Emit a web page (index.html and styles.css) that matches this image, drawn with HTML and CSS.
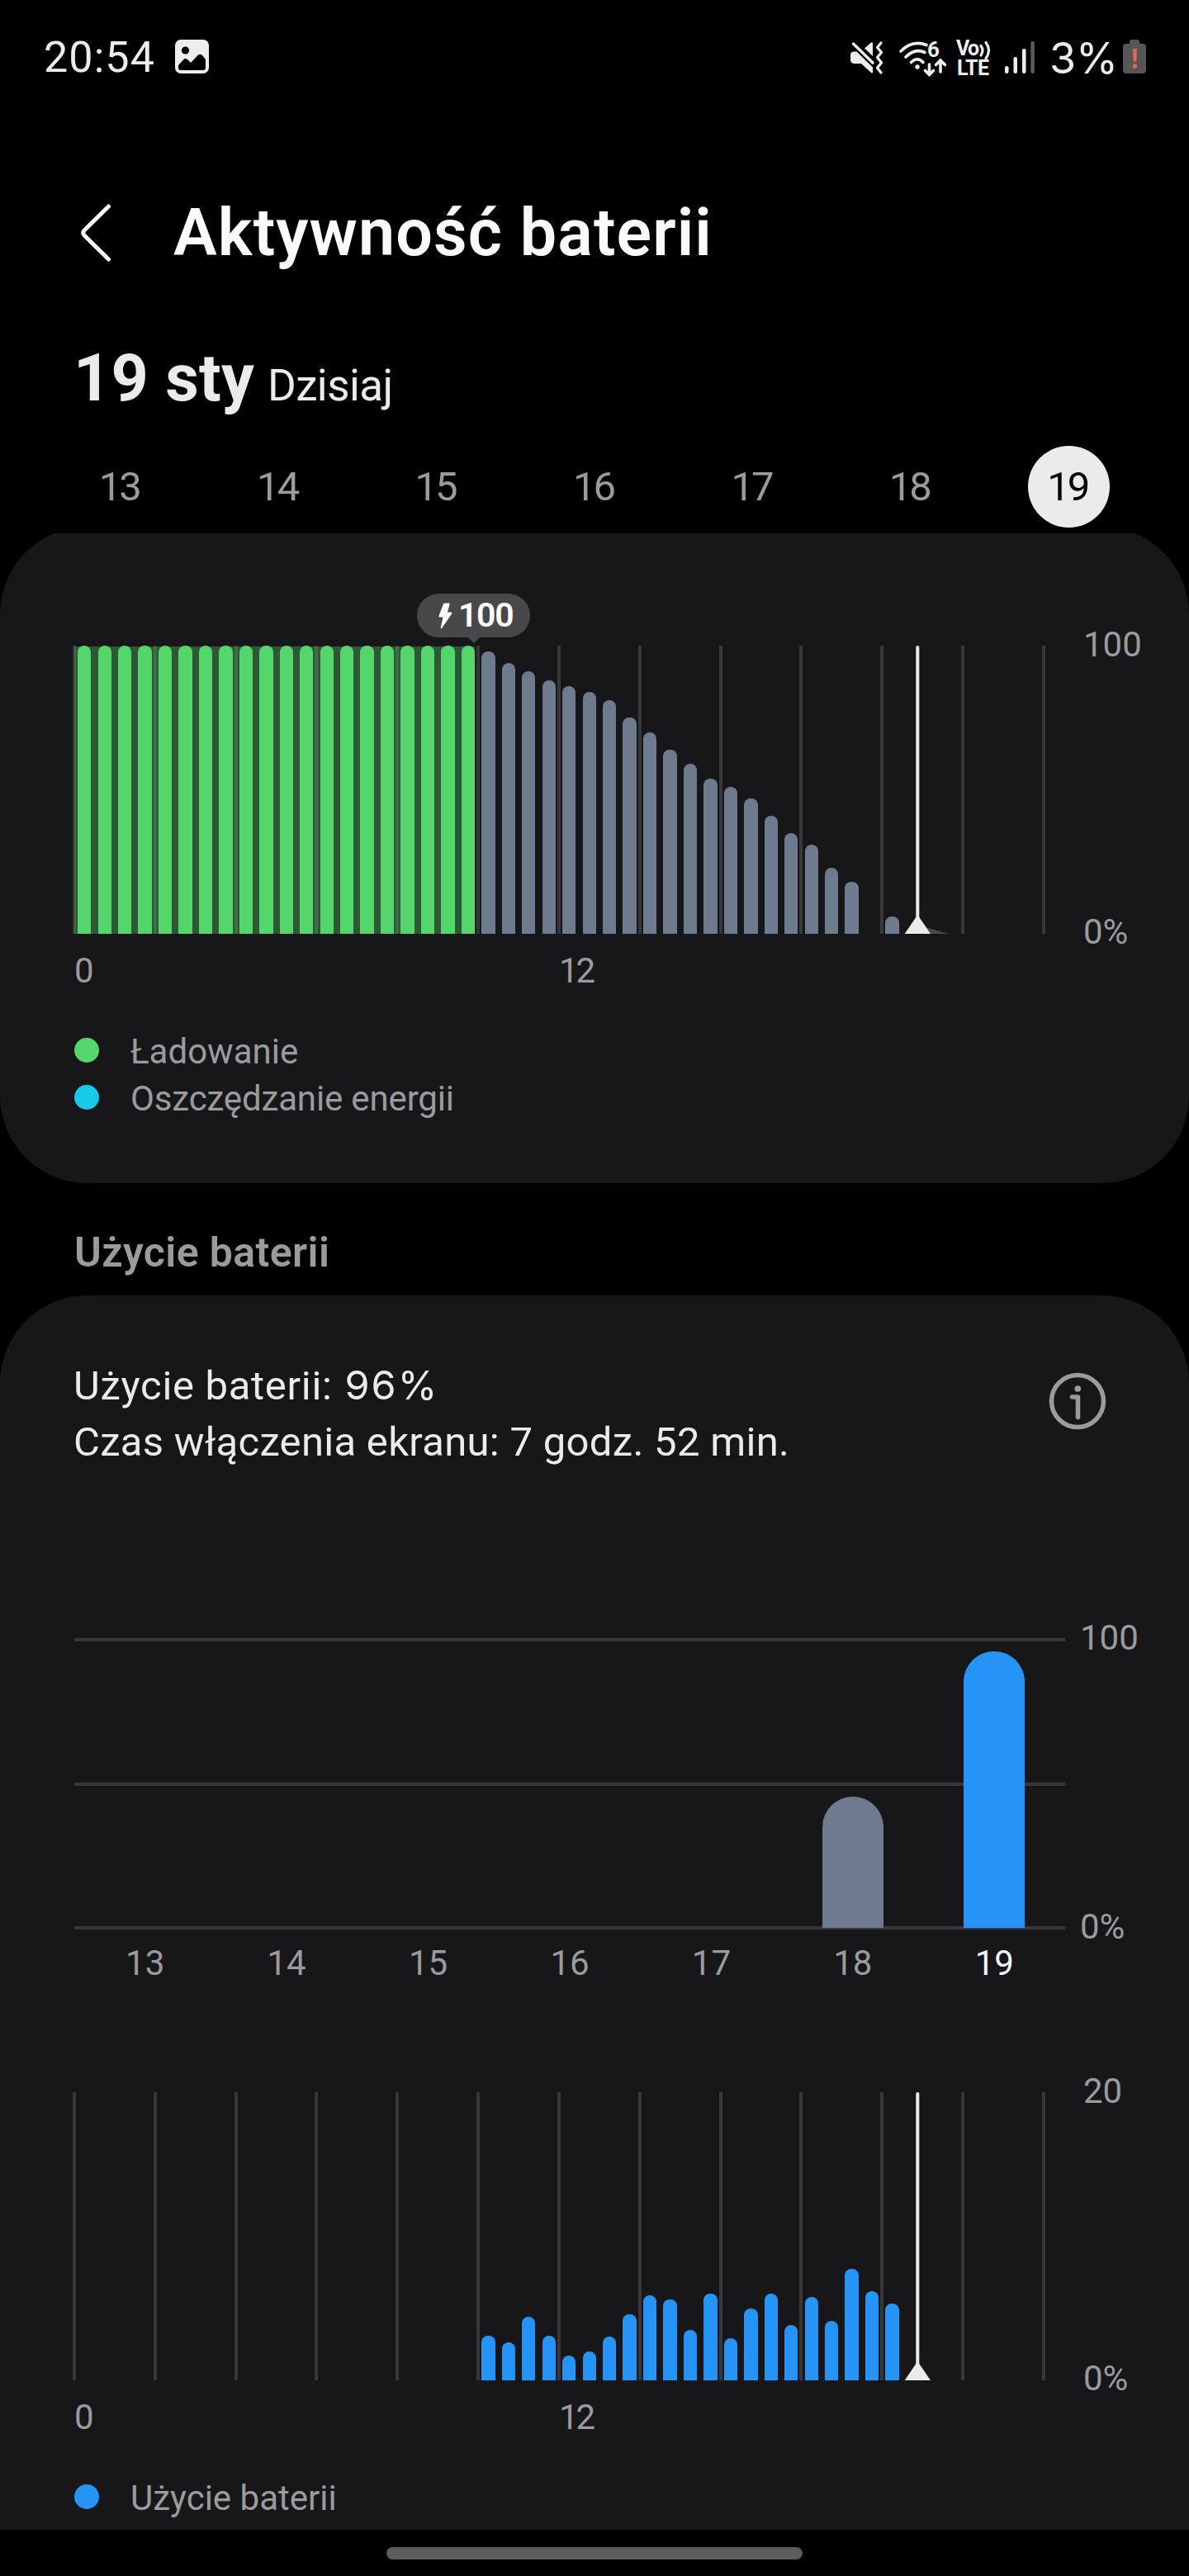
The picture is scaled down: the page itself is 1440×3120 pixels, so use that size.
FILE: index.html
```html
<!DOCTYPE html>
<html lang="pl">
<head>
<meta charset="utf-8">
<title>Aktywność baterii</title>
<link rel="stylesheet" href="styles.css">
</head>
<body>
<div class="status">
  <span class="clock">20:54</span>
  <svg class="ic-photo" width="41" height="41" viewBox="0 0 41 41"><rect width="41" height="41" rx="7" fill="#ededed"/><circle cx="12.5" cy="13" r="4.6" fill="#000"/><path d="M4 31 10 24.5Q12.5 22 15 24L19 28 27.500 19Q30.500 16.500 33 19L37 24V34Q37 37 34 37H7Q4 37 4 34Z" fill="#000"/></svg>
  <div class="status-right">
    <svg class="ic-mute" width="40" height="40" viewBox="0 0 40 40" fill="#ededed"><path d="M4 12.500H7.500L27 31.500V37Q27 39.500 25 38L13 27H5Q0 27 0 22V17Q0 12.500 4 12.500Z"/><path d="M17 8.500 25 1.500Q27 .5 27 3V18Z"/><path d="M3.500 3 27 26" stroke="#ededed" stroke-width="3.400" stroke-linecap="round"/><path d="M37 2 32.500 7.500 37.500 13.500 32.500 19.500 37.500 26 32.500 32 37 38" fill="none" stroke="#ededed" stroke-width="3.200" stroke-linecap="round" stroke-linejoin="round"/></svg>
    <svg class="ic-wifi" width="58" height="44" viewBox="0 0 58 44" fill="none" stroke="#ededed" stroke-width="3.600" stroke-linecap="round"><path d="M2 12Q16-2 33 4.500"/><path d="M8 19Q19 8 31 13.500"/><path d="M14.500 25.500Q22 18 29 25.500"/><circle cx="22" cy="31" r="2.700" fill="#ededed" stroke="none"/><path d="M36.500 28V40M31.500 35.500 36.500 40.500 41.500 35.500M50 37V23M44.500 28.500 50 23 55.500 28.500"/><text class="wifi-gen" x="34" y="18.500">6</text></svg>
    <svg class="ic-volte" width="44" height="44" viewBox="0 0 44 44"><text class="volte" x="0" y="18" textLength="28">Vo</text><text class="volte" x="1" y="42" textLength="39">LTE</text><path d="M30 6.500Q34 12 30 18M36 2.500Q43 12 36 22" fill="none" stroke="#ededed" stroke-width="3.200" stroke-linecap="round"/></svg>
    <svg class="ic-signal" width="36" height="40" viewBox="0 0 36 40" fill="#ededed"><rect x="0" y="30" width="4.500" height="9" rx="2.200"/><rect x="10.500" y="19" width="4.500" height="20" rx="2.200"/><rect x="21" y="9" width="4.500" height="30" rx="2.200"/><rect x="31.300" y="0" width="4.500" height="39" rx="2.200" fill="#5c5c5c"/></svg>
    <span class="percent">3%</span>
    <svg class="ic-battery" width="28" height="42" viewBox="0 0 28 42"><path d="M8 5V2.500Q8 0 10.500 0H17.500Q20 0 20 2.500V5H24Q28 5 28 9V37Q28 41 24 41H4Q0 41 0 37V9Q0 5 4 5Z" fill="#565656"/><path d="M12 11H17L16.400 26.500H12.600Z" fill="#dd6b4d"/><circle cx="14.500" cy="32" r="2.700" fill="#dd6b4d"/></svg>
  </div>
</div>

<header class="header">
  <svg width="36" height="70" viewBox="0 0 36 70" fill="none" stroke="#fafafc" stroke-width="5" stroke-linecap="round" stroke-linejoin="round"><path d="M33.500 3 4 32Q1.500 35 4 38L33.500 67"/></svg>
  <h1>Aktywność baterii</h1>
</header>

<div class="date"><strong>19 sty</strong><span>Dzisiaj</span></div>

<nav class="days">
  <span>13</span><span>14</span><span>15</span><span>16</span><span>17</span><span>18</span><span class="selected"><b>19</b></span>
</nav>

<main class="scroll">
  <section class="card level">
    <div class="chart">
      <div class="plot">
        <div class="grid"><i></i><i></i><i></i><i></i><i></i><i></i><i></i><i></i><i></i><i></i><i></i><i></i><i></i></div>
        <div class="charging-span"></div>
        <div class="bars">
          <i class="charge"></i><i class="charge"></i><i class="charge"></i><i class="charge"></i><i class="charge"></i><i class="charge"></i><i class="charge"></i><i class="charge"></i><i class="charge"></i><i class="charge"></i><i class="charge"></i><i class="charge"></i><i class="charge"></i><i class="charge"></i><i class="charge"></i><i class="charge"></i><i class="charge"></i><i class="charge"></i><i class="charge"></i><i class="charge"></i>
          <i style="height:98%"></i><i style="height:94%"></i><i style="height:91%"></i><i style="height:88%"></i><i style="height:86%"></i><i style="height:84%"></i><i style="height:81%"></i><i style="height:75%"></i><i style="height:70%"></i><i style="height:64%"></i><i style="height:59%"></i><i style="height:54%"></i><i style="height:51%"></i><i style="height:47%"></i><i style="height:41%"></i><i style="height:35%"></i><i style="height:31%"></i><i style="height:23%"></i><i style="height:18%"></i><i style="height:0%"></i><i style="height:6%"></i>
        </div>
        <svg class="marker" width="60" height="349" viewBox="0 0 60 349"><path d="M28 341.500 55 349H28Z" fill="#4b4b4e"/><path d="M17.300 2V335" stroke="#ebebed" stroke-width="4" stroke-linecap="round"/><path d="M17.300 326 33 349H1.700Z" fill="#ebebed"/></svg>
        <div class="tooltip"><svg width="17" height="32" viewBox="0 0 17 32"><path d="M6 1.500Q6.500 .5 8 .5H13Q14 .5 13.600 2L11 11.500H15.500Q17 11.800 16 13.500L4 31Q2.500 32 2.800 30L5.500 17.500H1.500Q0 17.300 .6 15.500Z" fill="#fff"/></svg><span>100</span></div>
      </div>
      <div class="scale"><span>100</span><span>0%</span></div>
    </div>
    <div class="hours"><span>0</span><span>12</span></div>
    <ul class="legend">
      <li><i class="dot green"></i><span>Ładowanie</span></li>
      <li><i class="dot cyan"></i><span class="saving">Oszczędzanie energii</span></li>
    </ul>
  </section>

  <h2>Użycie baterii</h2>

  <section class="card usage">
    <div class="summary">
      <div><p class="total">Użycie baterii: <span>96%</span></p><p class="screen">Czas włączenia ekranu: 7 godz. 52 min.</p></div>
      <svg width="70" height="70" viewBox="0 0 70 70" fill="none" stroke="#9b9b9d"><circle cx="35" cy="35" r="31.500" stroke-width="5.500"/><path d="M28.500 30H35.500V54.500" stroke-width="5.500" stroke-linecap="round" stroke-linejoin="round"/><circle cx="35.300" cy="20" r="3.800" fill="#9b9b9d" stroke="none"/></svg>
    </div>
    <div class="chart daily">
      <div class="plot">
        <div class="rows"><i></i><i></i><i></i></div>
        <div class="days-bars"><i style="height:45.5%"></i><i class="today" style="height:96%"></i></div>
      </div>
      <div class="scale"><span>100</span><span>0%</span></div>
    </div>
    <div class="day-labels"><span>13</span><span>14</span><span>15</span><span>16</span><span>17</span><span>18</span><span class="today">19</span></div>
    <div class="chart hourly">
      <div class="plot">
        <div class="grid"><i></i><i></i><i></i><i></i><i></i><i></i><i></i><i></i><i></i><i></i><i></i><i></i><i></i></div>
        <div class="bars blue">
          <i style="height:15.6%"></i><i style="height:13.1%"></i><i style="height:22.1%"></i><i style="height:15.6%"></i><i style="height:8.6%"></i><i style="height:10.1%"></i><i style="height:15.1%"></i><i style="height:23%"></i><i style="height:29.5%"></i><i style="height:28.1%"></i><i style="height:17.6%"></i><i style="height:30.1%"></i><i style="height:14.6%"></i><i style="height:25%"></i><i style="height:30.1%"></i><i style="height:19.1%"></i><i style="height:29%"></i><i style="height:20.6%"></i><i style="height:38.6%"></i><i style="height:31%"></i><i style="height:26.6%"></i>
        </div>
        <svg class="marker" width="60" height="349" viewBox="0 0 60 349"><path d="M17.300 2V335" stroke="#ebebed" stroke-width="4" stroke-linecap="round"/><path d="M17.300 326 33 349H1.700Z" fill="#ebebed"/></svg>
      </div>
      <div class="scale"><span>20</span><span>0%</span></div>
    </div>
    <div class="hours"><span>0</span><span>12</span></div>
    <ul class="legend">
      <li><i class="dot azure"></i><span class="use">Użycie baterii</span></li>
    </ul>
  </section>
</main>
<footer class="nav-handle"><i></i></footer>
</body>
</html>
```
FILE: styles.css
```css
* { box-sizing: border-box; margin: 0; padding: 0; }
body { width: 1440px; height: 3120px; background: #000; color: #ebebed; font-family: Roboto, "Liberation Sans", sans-serif; overflow: hidden; }
svg { display: block; flex: none; overflow: visible; }
i { display: block; }

.status { display: flex; align-items: center; height: 139px; padding: 0 52px; color: #ededed; font-size: 52px; line-height: 60px; }
.clock { width: 160px; padding: 1px 0 0 1px; letter-spacing: 1.1px; white-space: nowrap; }
.ic-photo { margin-top: -2px; }
.status-right { display: flex; align-items: center; margin-left: auto; }
.ic-wifi { margin: 4px 0 0 19px; }
.ic-volte { margin: 2px 0 0 11px; }
.ic-signal { margin-left: 15px; }
.percent { width: 89px; margin-left: 18px; padding-top: 2px; font-family: Inter, Roboto, sans-serif; font-size: 52px; white-space: nowrap; }
.ic-battery { margin-top: -2px; }
.wifi-gen { font-size: 26px; font-weight: 700; fill: #ededed; stroke: none; }
.volte { font-size: 25px; font-weight: 700; fill: #ededed; }

.header { display: flex; align-items: center; gap: 76px; height: 87px; margin-top: 99px; padding-left: 98px; color: #fafafc; }
h1 { padding-top: 2px; font-size: 79px; font-weight: 600; line-height: 85px; letter-spacing: 1.1px; white-space: nowrap; }

.date { display: flex; align-items: baseline; height: 80px; margin-top: 93px; padding-left: 89px; line-height: 80px; }
.date strong { width: 235px; font-size: 79px; font-weight: 700; letter-spacing: .3px; white-space: nowrap; }
.date span { font-size: 53px; letter-spacing: -.6px; }

.days { display: grid; grid-template-columns: repeat(7, 1fr); align-items: center; width: 1340px; height: 99px; margin: 42px 0 7px 50px; color: #9b9b9d; font-size: 49px; letter-spacing: -3px; text-align: center; }
.days > span { padding-right: 3px; }
.days .selected { padding-right: 0; }
.days .selected b { display: block; width: 99px; margin: 0 auto; padding-right: 3px; border-radius: 50%; background: #ebebeb; color: #000; font-weight: 400; line-height: 99px; }

.scroll { height: 2418px; overflow: hidden; }
.card { padding-left: 88px; background: #17171a; }
.level { height: 795px; margin-top: -8px; padding-top: 144px; border-radius: 106px; }
.chart { display: flex; height: 349px; }
.plot { display: grid; position: relative; width: 1178px; }
.plot > * { grid-area: 1 / 1; }
.grid { display: flex; justify-content: space-between; }
.grid i { width: 4px; background: #38383a; }
.charging-span { width: 485px; margin: 1px 0 0 2px; background: rgba(84, 214, 107, .34); }
.bars { display: grid; grid-template-columns: repeat(48, 1fr); align-items: end; justify-items: center; height: 349px; padding: 0 2px; }
.bars i { width: 16.3px; border-radius: 8px 8px 0 0; background: #6e7a8e; }
.bars .charge { height: 100%; background: #54d66b; }
.blue i { background: #2694f7; }
.blue i:first-child { grid-column-start: 21; }
.marker { position: absolute; left: 1006px; top: 0; }
.tooltip { position: absolute; left: 417px; top: -63px; display: flex; align-items: center; gap: 7px; width: 137px; height: 53px; padding-left: 26px; border-radius: 27px; background: #48484a; color: #fff; font-size: 41px; font-weight: 600; letter-spacing: -1.3px; line-height: 53px; }
.tooltip::after { content: ""; position: absolute; left: 61px; top: 52px; border: 8px solid transparent; border-top-color: #48484a; border-bottom: 0; }
.scale { display: flex; flex-direction: column; justify-content: space-between; margin: -26px 0 -23px 46px; color: #9b9b9d; font-size: 42px; line-height: 50px; }
.hours { display: grid; grid-template-columns: 587px 1fr; margin: 20px 0 42px 2px; color: #9b9b9d; font-size: 42px; letter-spacing: -3px; line-height: 50px; }
.legend { list-style: none; color: #9b9b9d; font-size: 42px; }
.legend li { display: flex; align-items: center; height: 57px; padding-left: 2px; }
.legend span { padding-top: 3px; }
.saving { letter-spacing: -.15px; }
.dot { width: 30px; height: 30px; margin-right: 38px; border-radius: 50%; }
.green { background: #54d66b; }
.cyan { background: #17cbe8; }
.azure { background: #2694f7; }

h2 { padding: 54px 0 22px 90px; color: #9b9b9d; font-size: 50px; font-weight: 600; letter-spacing: .4px; line-height: 60px; }

.usage { height: 1495px; padding-top: 76px; border-radius: 106px 106px 0 0; }
.summary { display: flex; justify-content: space-between; height: 136px; padding: 0 100px 0 1px; font-size: 49px; line-height: 68px; white-space: nowrap; }
.total { height: 68px; letter-spacing: .7px; }
.total span { margin-left: 2px; font-family: Inter, Roboto, sans-serif; font-size: 48.5px; line-height: 60px; letter-spacing: 2px; }
.screen { letter-spacing: .3px; }
.summary svg { margin-top: 17px; }
.daily { height: 353px; margin-top: 203px; }
.daily .plot { width: 1200px; margin-left: 2px; }
.rows { display: flex; flex-direction: column; justify-content: space-between; }
.rows i { height: 4px; background: #38383a; }
.days-bars { display: grid; grid-template-columns: repeat(7, 1fr); align-items: end; justify-items: center; height: 353px; padding: 2px 0; }
.days-bars i { width: 74px; border-radius: 37px 37px 0 0; background: #6e7a8e; }
.days-bars i:first-child { grid-column-start: 6; }
.days-bars .today { background: #2694f7; }
.daily .scale { margin: -25px 0 -22px 18px; }
.day-labels { display: grid; grid-template-columns: repeat(7, 1fr); width: 1200px; margin: 16px 0 131px 2px; color: #9b9b9d; font-size: 42px; line-height: 50px; text-align: center; }
.day-labels .today { color: #f4f4f6; }

.nav-handle { display: flex; justify-content: center; height: 56px; padding-top: 21px; }
.nav-handle i { width: 504px; height: 15px; border-radius: 8px; background: #5c5c5c; }
```
